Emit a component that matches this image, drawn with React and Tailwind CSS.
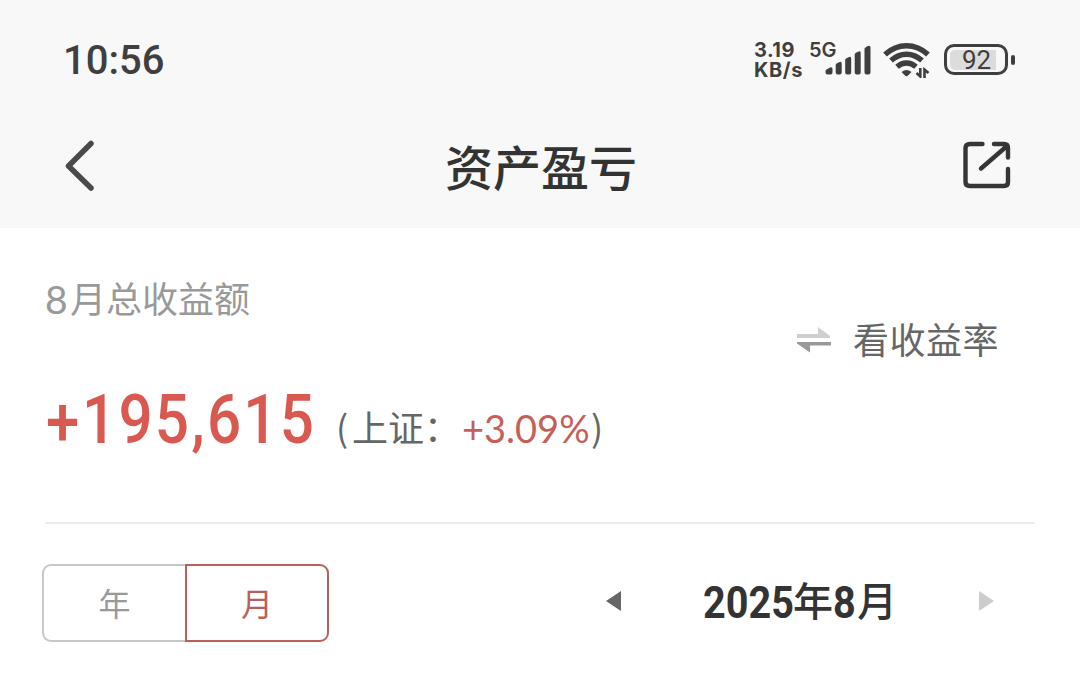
const CJK = "font-['Noto_Sans_CJK_SC',sans-serif]"
const NUM = "font-['Roboto','Noto_Sans_CJK_SC',sans-serif]"
const LIGHT_NUM = "font-['Lato','Noto_Sans_CJK_SC',sans-serif]"

export default function App() {
  return (
    <div className={`w-[1080px] h-[689px] bg-white overflow-hidden whitespace-nowrap ${CJK}`}>
      <header className="h-[228px] bg-[#f8f8f8]">
        <StatusBar />
        <TitleBar />
      </header>
      <main className="px-[45px]">
        <Summary />
        <div className="h-[2px] w-[990px] bg-[#ebebeb]" />
        <PeriodBar />
      </main>
    </div>
  )
}

function StatusBar() {
  return (
    <div className={`flex h-[120px] items-center pl-[63px] pr-[65px] text-[#3f3f3f] ${NUM}`}>
      <span className="mt-[2px] text-[40px] leading-[40px] font-medium">10:56</span>
      <div className="ml-auto w-[55px] text-[20px] leading-[20px] font-bold font-['Inter',sans-serif]">
        <div className="h-[20px] tracking-[0.500px]">3.19</div>
        <div className="h-[20px] tracking-[0.600px]">KB/s</div>
      </div>
      <div className="mb-[20px] w-[16px] text-[20px] leading-[20px] font-semibold font-['Inter',sans-serif]">5G</div>
      <SignalIcon />
      <WifiIcon />
      <Battery level={92} />
    </div>
  )
}

function SignalIcon() {
  return (
    <svg className="h-[30px] w-[46px] shrink-0" viewBox="0 0 46 30" fill="#3f3f3f">
      <path d="M0.500 26Q0.500 25 2 24.300L5 22.500Q7.500 21.500 7.500 24V27.500Q7.500 29.500 5.500 29.500H2.500Q0.500 29.500 0.500 27.500Z" />
      <path d="M10.700 20Q10.700 19 12 18.300L14 17.200Q16.700 16 16.700 18.500V27.500Q16.700 29.500 14.700 29.500H12.700Q10.700 29.500 10.700 27.500Z" />
      <path d="M20.200 15Q20.200 14 21.500 13.300L23.500 12.200Q26.200 11 26.200 13.500V27.500Q26.200 29.500 24.200 29.500H22.200Q20.200 29.500 20.200 27.500Z" />
      <path d="M29.700 9.500Q29.700 8.500 31 7.800L33 6.700Q35.700 5.500 35.700 8V27.500Q35.700 29.500 33.700 29.500H31.700Q29.700 29.500 29.700 27.500Z" />
      <path d="M39.500 4Q39.500 3 40.800 2.300L42.800 1Q45.500 0 45.500 2.500V27.500Q45.500 29.500 43.500 29.500H41.500Q39.500 29.500 39.500 27.500Z" />
    </svg>
  )
}

function WifiIcon() {
  return (
    <svg className="ml-[12px] h-[36px] w-[47px] shrink-0" viewBox="0 0 47 36" fill="none" stroke="#3f3f3f" strokeWidth="5.400">
      <path d="M2 12.500Q11.500 3.700 23.500 3.700T45 12.500" />
      <path d="M8 18.600Q15 12.300 23.500 12.300T39 18.600" />
      <path d="M14 24.800Q18.500 21 23.500 21T33 24.800" />
      <path d="M18.500 30Q23.500 26 28.500 30L25 33.500Q23.500 35 22 33.500Z" fill="#3f3f3f" stroke="none" />
      <path d="M37.300 26V34.500L33.500 31M41.500 36V27.500L45.500 31" strokeWidth="2.600" />
    </svg>
  )
}

function Battery({ level }) {
  return (
    <div className="mb-[1px] ml-[14px] flex items-center">
      <div className="flex h-[31px] w-[64px] items-center rounded-[10px] border-[3px] border-[#3f3f3f] p-[3px]">
        <div className="flex h-[20px] w-[46px] items-center justify-center rounded-l-[5px] bg-[#dcdcdc] pt-[2px] pl-[7px] text-[26px] leading-[25px]">
          {level}
        </div>
      </div>
      <div className="ml-[3px] h-[10px] w-[4px] rounded-full bg-[#3f3f3f]" />
    </div>
  )
}

function TitleBar() {
  return (
    <div className="flex h-[90px] items-center justify-between pl-[64px] pr-[69px]">
      <svg className="h-[52px] w-[32px]" viewBox="0 0 32 52" fill="none" stroke="#4a4a4a" strokeWidth="5.500" strokeLinecap="round" strokeLinejoin="round">
        <path d="M27 4.500 4.500 27 27 49" />
      </svg>
      <h1 className="mb-[1px] ml-[23px] text-[48px] leading-[60px] font-medium text-[#333]">资产盈亏</h1>
      <svg className="h-[48px] w-[48px]" viewBox="0 0 48 48" fill="none" stroke="#363636" strokeWidth="4.400" strokeLinecap="round" strokeLinejoin="round">
        <path d="M19.500 3H7Q2.500 3 2.500 7V41Q2.500 45 7 45H41Q45 45 45 41V28M31 3H41Q45 3 45 7V16.500M44 5 18 27.500" />
      </svg>
    </div>
  )
}

function Summary() {
  return (
    <section className="flex h-[294px] justify-between">
      <div>
        <div className="mt-[47px] flex h-[44px] items-center text-[36px] leading-[44px] text-[#999]">
          <span className={`mt-[3px] w-[25px] text-[39px] ${LIGHT_NUM}`}>8</span>
          月总收益额
        </div>
        <div className="mt-[57px] flex h-[84px] items-center">
          <div className={`mt-[7px] flex w-[291px] text-[68px] leading-[84px] font-medium text-[#d95951] ${NUM}`}>
            <span className="w-[37px] pt-[3px] pl-[1px]">
              <span className="inline-block origin-left scale-x-[0.880]">+</span>
            </span>
            <span className="inline-block origin-left scale-x-[0.885] tracking-[2.500px]">195,615</span>
          </div>
          <div className="mt-[15px] flex items-center text-[36px] leading-[44px] text-[#666]">
            <span className="w-[16px]">(</span>
            <span className="w-[110px]">上证：</span>
            <span className={`mt-[4px] w-[129px] text-[38px] text-[#c55f59] ${LIGHT_NUM}`}>+3.09%</span>
            <span>)</span>
          </div>
        </div>
      </div>
      <div className="mt-[90px] mr-[-9px] flex h-[44px] w-[247px] items-center text-[#666]">
        <SwapIcon />
        <span className="mb-[5px] ml-[22px] text-[36px] leading-[44px] tracking-[0.500px]">看收益率</span>
      </div>
    </section>
  )
}

function SwapIcon() {
  return (
    <svg className="h-[26px] w-[34px]" viewBox="0 0 34 26">
      <path d="M0 7H21V0L33 9V11H0Z" fill="#cfcfcf" />
      <path d="M34 15H0V16.500L13 25.500V18.500H34Z" fill="#999" />
    </svg>
  )
}

function PeriodBar() {
  return (
    <section className="mt-[40px] ml-[-3px] flex items-center">
      <div className="flex h-[78px] w-[287px] text-[32px]">
        <button className="w-[143px] rounded-l-[9px] border-2 border-r-0 border-[#c8c8c8] pb-[3px] text-[#999]">年</button>
        <button className="w-[144px] rounded-r-[9px] border-2 border-[#b9605b] pb-[3px] text-[#b9605b]">月</button>
      </div>
      <svg className="mb-[4px] ml-[277px] h-[20px] w-[15px]" viewBox="0 0 15 20">
        <path d="M15 0V20L0 10Z" fill="#666" />
      </svg>
      <div className="mb-[8px] ml-[82px] flex h-[60px] w-[194px] items-center text-[40px] leading-[60px] font-medium text-[#333]">
        <DateDigits className="w-[90px]">2025</DateDigits>
        年
        <DateDigits className="w-[24px]">8</DateDigits>
        月
      </div>
      <svg className="mb-[4px] ml-[82px] h-[20px] w-[15px]" viewBox="0 0 15 20">
        <path d="M0 0V20L15 10Z" fill="#ccc" />
      </svg>
    </section>
  )
}

function DateDigits({ className, children }) {
  return (
    <span className={`${className} mt-[8px] text-[45px] font-bold font-['Roboto',sans-serif]`}>
      <span className="inline-block origin-left scale-x-[0.880]">{children}</span>
    </span>
  )
}
